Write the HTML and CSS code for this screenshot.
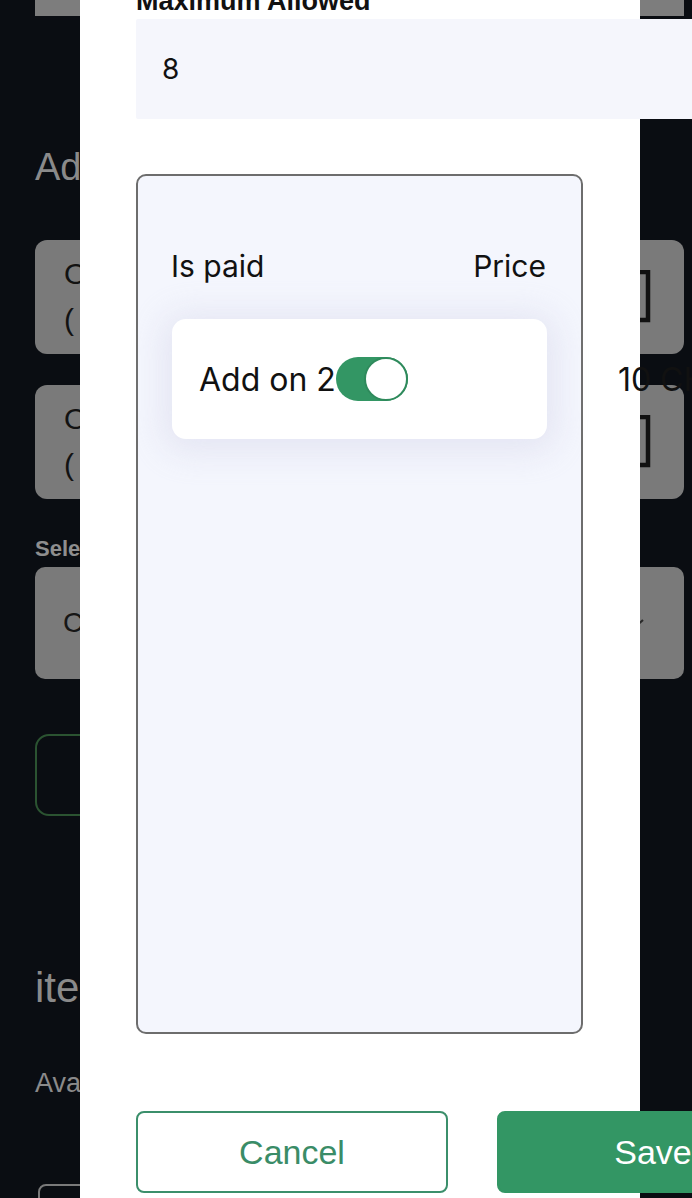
FILE: index.html
```html
<!DOCTYPE html>
<html lang="en">
<head>
<meta charset="utf-8">
<title>Add-on options</title>
<link rel="stylesheet" href="styles.css">
</head>
<body>
  <div class="page">
    <div class="topbar"></div>
    <h2 class="bg-title">Add ons</h2>
    <div class="bg-card">
      <div class="bg-card-text">
        <div>Option one</div>
        <div>( 2 add ons )</div>
      </div>
      <svg class="bg-trash" width="40" height="54" viewBox="0 0 40 54"><path d="M2 2 H36 V50 H2 Z" fill="none" stroke="#111" stroke-width="4.5"/></svg>
    </div>
    <div class="bg-card">
      <div class="bg-card-text">
        <div>Option two</div>
        <div>( 1 add on )</div>
      </div>
      <svg class="bg-trash" width="40" height="54" viewBox="0 0 40 54"><path d="M2 2 H36 V50 H2 Z" fill="none" stroke="#111" stroke-width="4.5"/></svg>
    </div>
    <div class="bg-label">Select option</div>
    <div class="bg-select">
      <span>Choose</span>
      <svg width="18" height="10" viewBox="0 0 18 10"><path d="M2 2 L9 8 L16 2" fill="none" stroke="#2a2a2a" stroke-width="2.2"/></svg>
    </div>
    <div class="bg-button"></div>
    <h2 class="bg-title bg-title-2">items</h2>
    <div class="bg-sub">Available</div>
    <div class="bg-box"></div>
  </div>

  <div class="modal">
    <div class="field-label">Maximum Allowed</div>
    <div class="field-input">8</div>

    <div class="addon-panel">
      <div class="addon-head">
        <span>Is paid</span>
        <span>Price</span>
      </div>
      <div class="addon-row">
        <span class="addon-name">Add on 2</span>
        <span class="toggle"><span class="knob"></span></span>
        <span class="addon-price">10 CHF</span>
      </div>
    </div>

    <div class="actions">
      <button class="btn btn-cancel">Cancel</button>
      <button class="btn btn-save">Save</button>
    </div>
  </div>
</body>
</html>
```

FILE: styles.css
```css
html, body {
  margin: 0;
  padding: 0;
  height: 1198px;
  overflow: hidden;
}
body {
  background: #0a0d12;
  font-family: "Liberation Sans", Arial, sans-serif;
  position: relative;
}

/* Background (dimmed) page */
.page {
  padding: 0 8px 0 35px;
}
.topbar {
  height: 16px;
  background: #7d7d7d;
}
.bg-title {
  margin: 128px 0 0;
  font-size: 38px;
  line-height: 46px;
  font-weight: normal;
  color: #8a8a8a;
}
.bg-card {
  margin-top: 50px;
  height: 114px;
  background: #7a7a7a;
  border-radius: 12px;
  display: flex;
  align-items: center;
  justify-content: space-between;
  padding: 0 32px 0 29px;
}
.bg-card + .bg-card {
  margin-top: 31px;
}
.bg-card-text {
  font-size: 30px;
  line-height: 46px;
  color: #121212;
}
.bg-label {
  margin-top: 37px;
  font-size: 22px;
  line-height: 26px;
  font-weight: bold;
  color: #8e8e8e;
}
.bg-select {
  margin-top: 5px;
  height: 112px;
  background: #7a7a7a;
  border-radius: 10px;
  display: flex;
  align-items: center;
  justify-content: space-between;
  padding: 0 39px 0 28px;
  font-size: 28px;
  color: #161616;
}
.bg-button {
  margin-top: 55px;
  width: 420px;
  height: 78px;
  border: 2px solid #2b5331;
  border-radius: 14px;
}
.bg-title-2 {
  margin-top: 149px;
  font-size: 42px;
}
.bg-sub {
  margin-top: 56px;
  font-size: 27px;
  line-height: 32px;
  color: #8a8a8a;
}
.bg-box {
  margin: 85px 0 0 3px;
  width: 300px;
  height: 60px;
  border: 2px solid #7a7a7a;
  border-radius: 8px;
}

/* Modal */
.modal {
  position: absolute;
  left: 80px;
  top: 0;
  width: 560px;
  height: 1198px;
  background: #ffffff;
  padding-left: 56px;
  box-sizing: border-box;
}
.field-label {
  margin-top: -15px;
  font-size: 27px;
  line-height: 32px;
  font-weight: bold;
  color: #111;
}
.field-input {
  margin-top: 2px;
  width: 620px;
  height: 100px;
  box-sizing: border-box;
  background: #f5f6fc;
  border-radius: 2px;
  padding-left: 26px;
  display: flex;
  align-items: center;
  font-family: Inter, "Noto Sans", sans-serif;
  font-size: 28px;
  color: #111;
}
.addon-panel {
  margin-top: 55px;
  width: 447px;
  height: 860px;
  box-sizing: border-box;
  border: 2px solid #6d6d6d;
  border-radius: 10px;
  background: #f4f6fd;
  padding-top: 72px;
  font-family: Inter, "Noto Sans", sans-serif;
  color: #111;
}
.addon-head {
  display: flex;
  justify-content: space-between;
  padding: 0 35px 0 33px;
  font-size: 30px;
  line-height: 36px;
}
.addon-row {
  margin: 35px 34px 0;
  height: 120px;
  background: #ffffff;
  border-radius: 14px;
  box-shadow: 0 4px 32px 10px rgba(210, 210, 232, 0.45);
  display: flex;
  align-items: center;
  padding-left: 27px;
  font-size: 32px;
  white-space: nowrap;
}
.toggle {
  position: relative;
  flex: none;
  width: 72px;
  height: 44px;
  border-radius: 22px;
  background: #339664;
}
.knob {
  position: absolute;
  right: 0;
  top: 0;
  width: 40px;
  height: 40px;
  border-radius: 50%;
  background: #fff;
  border: 2px solid #2f8a5c;
}
.addon-price {
  margin-left: 210px;
}
.actions {
  margin-top: 77px;
  display: flex;
  gap: 49px;
}
.btn {
  flex: none;
  width: 312px;
  height: 82px;
  border-radius: 8px;
  font-family: "Liberation Sans", Arial, sans-serif;
  font-size: 34px;
  cursor: pointer;
}
.btn-cancel {
  background: #fff;
  border: 2px solid #3b8f6b;
  color: #3a8c67;
}
.btn-save {
  background: #339664;
  border: 2px solid #339664;
  color: #fff;
}
```
